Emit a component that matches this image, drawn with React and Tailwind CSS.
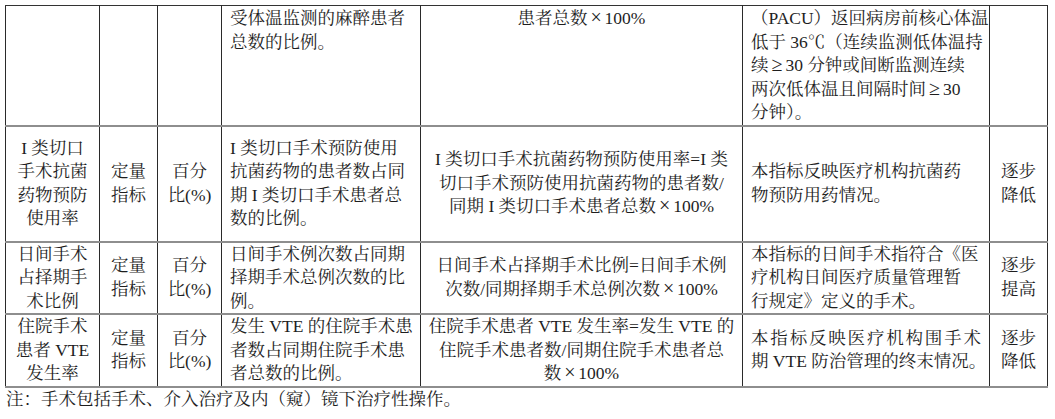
const rows = [
  {
    h: 'h-[118px]',
    top: true,
    c1: [],
    c2: [],
    c3: [],
    c4: ['受体温监测的麻醉患者', '总数的比例。'],
    c5: ['患者总数×100%'],
    c6: ['（PACU）返回病房前核心体温', '低于 36℃（连续监测低体温持', '续≥30 分钟或间断监测连续', '两次低体温且间隔时间≥30', '分钟）。'],
    c7: [],
  },
  {
    h: 'h-[116px]',
    c1: ['I 类切口', '手术抗菌', '药物预防', '使用率'],
    c2: ['定量', '指标'],
    c3: ['百分', '比(%)'],
    c4: ['I 类切口手术预防使用', '抗菌药物的患者数占同', '期 I 类切口手术患者总', '数的比例。'],
    c5: ['I 类切口手术抗菌药物预防使用率=I 类', '切口手术预防使用抗菌药物的患者数/', '同期 I 类切口手术患者总数×100%'],
    c6: ['本指标反映医疗机构抗菌药', '物预防用药情况。'],
    c7: ['逐步', '降低'],
  },
  {
    h: 'h-[72px]',
    c1: ['日间手术', '占择期手', '术比例'],
    c2: ['定量', '指标'],
    c3: ['百分', '比(%)'],
    c4: ['日间手术例次数占同期', '择期手术总例次数的比', '例。'],
    c5: ['日间手术占择期手术比例=日间手术例', '次数/同期择期手术总例次数×100%'],
    c6: ['本指标的日间手术指符合《医', '疗机构日间医疗质量管理暂', '行规定》定义的手术。'],
    c7: ['逐步', '提高'],
  },
  {
    h: 'h-[71px]',
    c1: ['住院手术', '患者 VTE', '发生率'],
    c2: ['定量', '指标'],
    c3: ['百分', '比(%)'],
    c4: ['发生 VTE 的住院手术患', '者数占同期住院手术患', '者总数的比例。'],
    c5: ['住院手术患者 VTE 发生率=发生 VTE 的', '住院手术患者数/同期住院手术患者总', '数×100%'],
    c6: ['本指标反映医疗机构围手术', '期 VTE 防治管理的终末情况。'],
    c7: ['逐步', '降低'],
    justifyFirst6: true,
  },
];

// × and ≥ are full-width in the source document
function Text({ s }) {
  const parts = s.split(/([×≥])/);
  return parts.map((p, i) =>
    p === '×' || p === '≥' ? (
      <span key={i} className="inline-block w-[17px] text-center text-[20px] leading-none font-light">
        {p}
      </span>
    ) : (
      p
    )
  );
}

function Lines({ lines, justifyFirst }) {
  return lines.map((l, i) => (
    <div
      key={i}
      className={`whitespace-nowrap ${justifyFirst && i === 0 ? 'text-justify [text-align-last:justify]' : ''}`}
    >
      <Text s={l} />
    </div>
  ));
}

export default function App() {
  const cell = 'border-x border-x-[#2a2a2a] border-y-2 border-y-[#8e8e8e] p-0';
  return (
    <div
      className="bg-white text-[#1e1e1e] text-[17.5px] leading-[23.5px] pt-[5px] pl-[5px] w-[1055px] h-[419px]"
      style={{ fontFamily: '"Liberation Serif", "Noto Serif CJK SC", "Noto Sans CJK SC", serif' }}
    >
      <table className="table-fixed border-collapse w-[1042px]">
        <colgroup>
          <col className="w-[94px]" />
          <col className="w-[58px]" />
          <col className="w-[64px]" />
          <col className="w-[199px]" />
          <col className="w-[322px]" />
          <col className="w-[247px]" />
          <col className="w-[58px]" />
        </colgroup>
        <tbody>
          {rows.map((r, i) => {
            const va = r.top ? 'align-top pt-px' : 'align-middle';
            const topB = r.top ? 'border-t border-t-[#333]' : '';
            return (
              <tr key={i} className={r.h}>
                <td className={`${cell} ${topB} ${va} text-center`}>
                  <Lines lines={r.c1} />
                </td>
                <td className={`${cell} ${topB} ${va} text-center`}>
                  <Lines lines={r.c2} />
                </td>
                <td className={`${cell} ${topB} ${va} text-center`}>
                  <Lines lines={r.c3} />
                </td>
                <td className={`${cell} ${topB} ${va} text-left px-[8px]`}>
                  <Lines lines={r.c4} />
                </td>
                <td className={`${cell} ${topB} ${va} text-center`}>
                  <Lines lines={r.c5} />
                </td>
                <td className={`${cell} ${topB} ${va} text-left px-[8px]`}>
                  <Lines lines={r.c6} justifyFirst={r.justifyFirst6} />
                </td>
                <td className={`${cell} ${topB} ${va} text-center`}>
                  <Lines lines={r.c7} />
                </td>
              </tr>
            );
          })}
        </tbody>
      </table>
      <p className="pl-px whitespace-nowrap">注：手术包括手术、介入治疗及内（窥）镜下治疗性操作。</p>
    </div>
  );
}
